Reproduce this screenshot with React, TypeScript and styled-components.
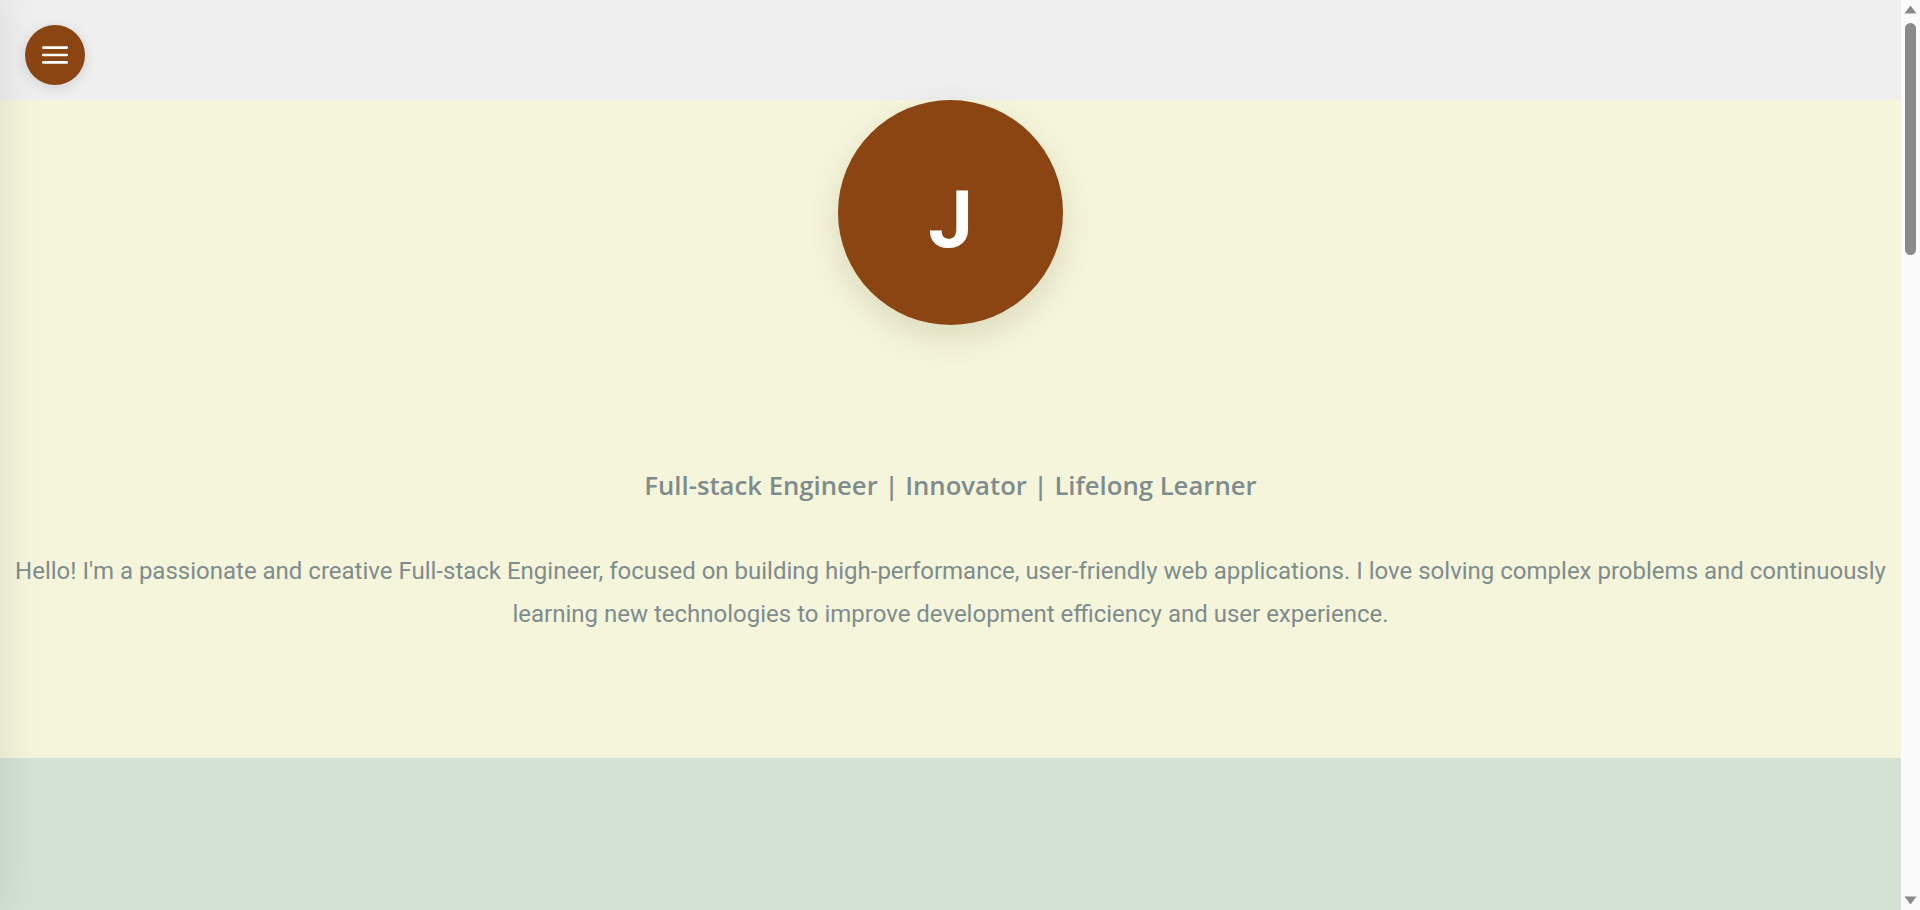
import React from "react";
import styled, { createGlobalStyle } from "styled-components";

const GlobalStyle = createGlobalStyle`
  *, *::before, *::after { box-sizing: border-box; }
  html, body { margin: 0; padding: 0; }
  html { scrollbar-width: none; }
  html::-webkit-scrollbar { display: none; }
  body {
    font-family: Roboto, "Liberation Sans", sans-serif;
    background: #efefef;
    color: #7f8c8d;
  }
`;

const Page = styled.div`
  display: flex;
  flex-direction: column;
  min-height: 100vh;
  margin-right: 19px;
`;

const EdgeShade = styled.div`
  position: fixed;
  top: 0;
  left: 0;
  width: 260px;
  height: 100vh;
  transform: translateX(-100%);
  box-shadow: 0 0 42px rgba(0, 0, 0, 0.1);
  pointer-events: none;
  z-index: 20;
`;

const ScrollRail = styled.div`
  position: fixed;
  top: 0;
  right: 0;
  width: 19px;
  height: 100vh;
  background: #fafafa;
  display: flex;
  flex-direction: column;
  align-items: center;
  z-index: 30;
`;

const RailArrow = styled.div`
  width: 19px;
  height: 19px;
  display: flex;
  align-items: center;
  justify-content: center;
  flex: none;
`;

const RailTrack = styled.div`
  flex: 1;
  width: 100%;
  display: flex;
  justify-content: center;
  padding-top: 4px;
`;

const RailThumb = styled.div`
  width: 11px;
  height: 232px;
  border-radius: 6px;
  background: #8a8a8a;
`;

const Header = styled.header`
  height: 100px;
  background: #efefef;
  display: flex;
  align-items: flex-start;
  padding: 25px;
`;

const MenuButton = styled.button`
  width: 60px;
  height: 60px;
  border-radius: 50%;
  border: none;
  padding: 0;
  background: #8b4513;
  display: flex;
  align-items: center;
  justify-content: center;
  box-shadow: 0 3px 14px rgba(0, 0, 0, 0.12);
  cursor: pointer;
`;

const Hero = styled.section`
  background: #f5f5dc;
  display: flex;
  flex-direction: column;
  align-items: center;
  padding: 0 0 122px;
`;

const Avatar = styled.div`
  width: 225px;
  height: 225px;
  border-radius: 50%;
  background: #8b4513;
  display: flex;
  align-items: center;
  justify-content: center;
  padding-top: 14px;
  box-shadow: 0 12px 32px rgba(90, 80, 20, 0.16);
  font-family: Roboto, sans-serif;
  font-weight: 700;
  font-size: 80px;
  line-height: 1;
  color: #ffffff;
`;

const Tagline = styled.h2`
  margin: 143px 0 0;
  font-family: "Open Sans", sans-serif;
  font-weight: 600;
  font-size: 25.7px;
  line-height: 36px;
  color: #7f8c8d;
  text-align: center;
`;

const Intro = styled.p`
  margin: 46px 0 0;
  font-family: Roboto, sans-serif;
  font-size: 24px;
  line-height: 43.2px;
  color: #7f8c8d;
  text-align: center;
`;

const Section = styled.section<{ $bg: string; $min: number }>`
  background: ${(p) => p.$bg};
  min-height: ${(p) => p.$min}px;
`;

export default function App() {
  return (
    <>
      <GlobalStyle />
      <EdgeShade />
      <ScrollRail aria-hidden="true">
        <RailArrow>
          <svg width="13" height="9" viewBox="0 0 13 9">
            <path d="M0.5 8.5 L6.5 0.5 L12.5 8.5 Z" fill="#8a8a8a" />
          </svg>
        </RailArrow>
        <RailTrack>
          <RailThumb />
        </RailTrack>
        <RailArrow>
          <svg width="13" height="9" viewBox="0 0 13 9">
            <path d="M0.5 0.5 L6.5 8.5 L12.5 0.5 Z" fill="#8a8a8a" />
          </svg>
        </RailArrow>
      </ScrollRail>
      <Page>
        <Header>
          <MenuButton aria-label="Open menu">
            <svg width="26" height="20" viewBox="0 0 26 20" fill="none">
              <line x1="1.3" y1="2.6" x2="24.7" y2="2.6" stroke="#fff" strokeWidth="2.6" strokeLinecap="round" />
              <line x1="1.3" y1="10" x2="24.7" y2="10" stroke="#fff" strokeWidth="2.6" strokeLinecap="round" />
              <line x1="1.3" y1="17.4" x2="24.7" y2="17.4" stroke="#fff" strokeWidth="2.6" strokeLinecap="round" />
            </svg>
          </MenuButton>
        </Header>
        <Hero id="home">
          <Avatar>J</Avatar>
          <Tagline>Full-stack Engineer | Innovator | Lifelong Learner</Tagline>
          <Intro>
            Hello! I'm a passionate and creative Full-stack Engineer, focused on building high-performance, user-friendly web
            applications. I love solving complex problems and continuously learning new technologies to improve development
            efficiency and user experience.
          </Intro>
        </Hero>
        <Section id="skills" $bg="#d4e2d4" $min={900} />
        <Section id="projects" $bg="#f5f5dc" $min={900} />
        <Section id="contact" $bg="#d4e2d4" $min={877} />
      </Page>
    </>
  );
}
